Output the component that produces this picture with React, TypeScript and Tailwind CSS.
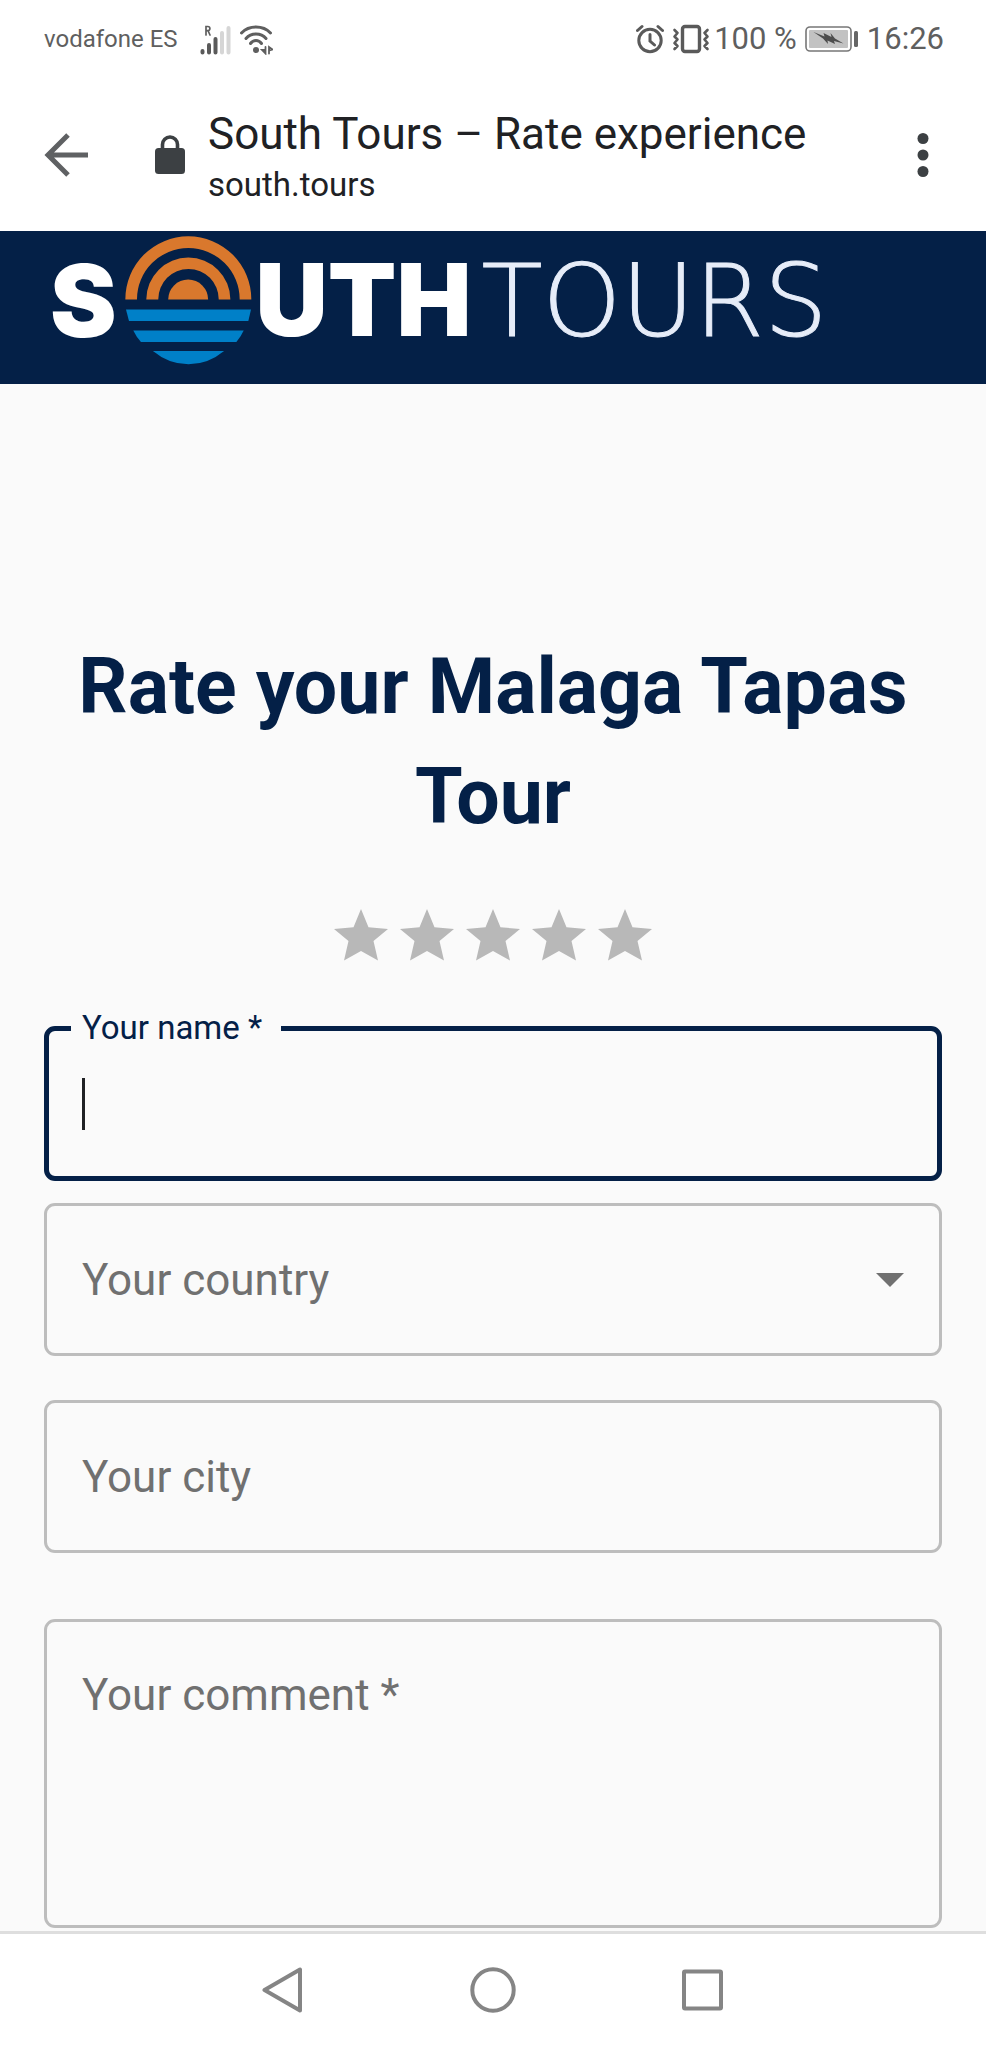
import React from "react";

const STARS = [1, 2, 3, 4, 5];

function SignalIcon() {
  return (
    <svg width="31" height="31" viewBox="0 0 31 31" fill="none" strokeWidth="4" strokeLinecap="round" aria-hidden="true">
      <path d="M6 11V2.500h1.800a2 2 0 0 1 0 4.200H6m2 0L10 11" stroke="#5f5f5f" strokeWidth="1.700" />
      <path d="M2.500 27v1.500M9 21v7.500M15.500 15v13.500" stroke="#5a5a5a" />
      <path d="M22 9v19.500M28.500 4v24.500" stroke="#d6d6d6" />
    </svg>
  );
}

function WifiIcon() {
  return (
    <svg width="34" height="31" viewBox="0 0 34 31" fill="none" stroke="#5f5f5f" strokeWidth="3" strokeLinecap="round" aria-hidden="true">
      <path d="M2.500 9C10 1 24 1 31.500 9M7 14.500c5-6 15-6 20 0M11.500 19.500c3-4 8-4 11 0" />
      <circle cx="17" cy="26" r="3" fill="#5f5f5f" stroke="none" />
      <path d="M26.500 23v6.500l-3.500-3.500h3M30 29.500V23l3.500 2.500-3 1" strokeWidth="1.800" />
    </svg>
  );
}

function AlarmIcon() {
  return (
    <svg width="28" height="30" viewBox="0 0 28 30" fill="none" stroke="#5a5a5a" strokeWidth="3" strokeLinecap="round" aria-hidden="true">
      <circle cx="14" cy="16.500" r="11.200" />
      <path d="M14 10.500v6.500l4.500 4M1.500 6.500 6 2.500M26.500 6.500 22 2.500" />
    </svg>
  );
}

function VibrateIcon() {
  return (
    <svg width="38" height="30" viewBox="0 0 38 30" fill="none" stroke="#5a5a5a" strokeLinejoin="round" strokeLinecap="round" aria-hidden="true">
      <rect x="10.500" y="2.500" width="17" height="25" rx="2.500" strokeWidth="3.400" />
      <path d="m2.500 6 3 3-3 3.500 3 3-3 3.500 3 3-3 3M35.500 6l-3 3 3 3.500-3 3 3 3.500-3 3 3 3" strokeWidth="2.600" />
    </svg>
  );
}

function BatteryIcon() {
  return (
    <svg width="54" height="26" viewBox="0 0 54 26" aria-hidden="true">
      <rect x="1" y="1" width="45" height="24" rx="4" fill="#fff" stroke="#777" strokeWidth="1.600" />
      <rect x="4" y="4" width="39" height="18" rx="1" fill="#c2c2c2" />
      <path d="m8.500 6 11 4.500L18.500 7l8 4-1-4 4.500 5.500 8.500 5-9.500-2.500 1 3-7.500-3.500.5 3.500-5-5.500z" fill="#4d4d4d" />
      <rect x="49" y="5" width="4" height="16" rx="1.500" fill="#666" />
    </svg>
  );
}

function SunMark() {
  return (
    <svg width="127" height="129" viewBox="286 34 382 388" aria-hidden="true">
      <g fill="#d9782d">
        <path d="M287 225a189.500 190 0 0 1 379 0h-35a154.500 155 0 0 0-309 0z" />
        <path d="M350 225a126.500 126 0 0 1 253 0h-35a91 92 0 0 0-182 0z" />
        <path d="M416 225a60 60 0 0 1 120 0z" />
      </g>
      <g fill="#0080c8">
        <path d="M289 255h376l-8 35H298z" />
        <path d="M311 318h332q-8 18-22 35H334q-14-16-23-35z" />
        <path d="M370 380h214q-48 40-107 40t-107-40z" />
      </g>
    </svg>
  );
}

function StatusBar() {
  return (
    <div className="flex h-[78px] items-center justify-between pr-[42px] pl-11 text-[#5f5f5f]">
      <div className="flex items-center">
        <span className="text-2xl">vodafone ES</span>
        <span className="ml-[22px] flex gap-2">
          <SignalIcon />
          <WifiIcon />
        </span>
      </div>
      <div className="flex items-center gap-2 text-[31px] leading-10">
        <div className="flex items-center gap-2">
          <AlarmIcon />
          <VibrateIcon />
        </div>
        <span className="-ml-1">100 %</span>
        <BatteryIcon />
        <span>16:26</span>
      </div>
    </div>
  );
}

function BrowserBar() {
  return (
    <div className="flex h-[153px] items-center pr-[57px] pl-11">
      <button type="button" aria-label="Close page">
        <svg width="44" height="44" viewBox="0 0 44 44" fill="none" stroke="#5f6163" strokeWidth="5" aria-hidden="true">
          <path d="M24 2 4 22l20 20M3 22h41" />
        </svg>
      </button>
      <svg className="ml-[67px]" width="30" height="39" viewBox="0 0 30 39" aria-hidden="true">
        <rect y="13" width="30" height="26" rx="3.500" fill="#3c4043" />
        <path d="M7.500 15V9.500a7.500 7.500 0 0 1 15 0V15" fill="none" stroke="#3c4043" strokeWidth="3.600" />
      </svg>
      <div className="mt-2 ml-[23px] flex-1 text-[#202124]">
        <p className="text-[44px] leading-[52px]">South Tours – Rate experience</p>
        <p className="text-[33px] leading-[50px]">south.tours</p>
      </div>
      <button type="button" aria-label="Menu">
        <svg width="12" height="44" viewBox="0 0 12 44" fill="#3c4043" aria-hidden="true">
          <circle cx="6" cy="5.500" r="5.500" />
          <circle cx="6" cy="22" r="5.500" />
          <circle cx="6" cy="38.500" r="5.500" />
        </svg>
      </button>
    </div>
  );
}

function SiteHeader() {
  return (
    <header className="h-[153px] bg-[#042047] pt-[5px] pl-[50px]">
      <a href="#home" className="flex h-[129px] items-center font-['Inter',sans-serif] text-[100px] leading-none text-white">
        <span className="font-black">S</span>
        <span className="mr-1 ml-2">
          <SunMark />
        </span>
        <span className="flex items-baseline gap-2.5">
          <span className="font-black">UTH</span>
          <span className="font-['DejaVu_Sans',sans-serif] font-extralight text-[#e6ecf8] [-webkit-text-stroke:1px_#e6ecf8]">TOURS</span>
        </span>
      </a>
    </header>
  );
}

function RatingForm() {
  return (
    <form className="flex flex-col px-11" onSubmit={(e) => e.preventDefault()}>
      <div className="mt-[52px] flex justify-center" role="group" aria-label="Rating">
        {STARS.map((n) => (
          <button key={n} type="button" aria-label={`${n} of 5`}>
            <svg width="66" height="66" viewBox="0 0 66 66" fill="#b8b8b8" aria-hidden="true">
              <path d="m33 5 7.500 18.200L60 25 45.500 37l4.500 19.500-17-9.500-17 9.500L20.500 37 6 25l19.500-1.800z" />
            </svg>
          </button>
        ))}
      </div>

      <fieldset className="mt-9 rounded-[11px] border-[5px] border-[#042047]">
        <legend className="ml-[22px] pr-[19px] pl-[11px] text-[33px] leading-[44px] text-[#042047]">
          <label htmlFor="name">Your name *</label>
        </legend>
        <div className="flex items-center pt-7 pr-9 pb-[46px] pl-[33px]">
          <span className="h-[52px] w-[3px] bg-[#202124]" />
          <input id="name" required className="h-[52px] min-w-0 flex-1 text-[44px] caret-transparent outline-none" />
        </div>
      </fieldset>

      <div className="relative mt-[22px]">
        <select
          aria-label="Your country"
          defaultValue=""
          className="block h-[153px] w-full appearance-none rounded-[11px] border-[3px] border-[#bdbdbd] px-[35px] text-[44px] text-[#707070] outline-none"
        >
          <option value="">Your country</option>
        </select>
        <svg className="pointer-events-none absolute top-1/2 right-[38px] -translate-y-1/2" width="28" height="14" viewBox="0 0 28 14" fill="#707070" aria-hidden="true">
          <path d="M0 0h28L14 14z" />
        </svg>
      </div>

      <input
        aria-label="Your city"
        placeholder="Your city"
        className="mt-11 h-[153px] rounded-[11px] border-[3px] border-[#bdbdbd] px-[35px] text-[44px] placeholder:text-[#707070] outline-none"
      />

      <textarea
        aria-label="Your comment"
        placeholder="Your comment *"
        className="mt-[66px] h-[309px] resize-none rounded-[11px] border-[3px] border-[#bdbdbd] px-[35px] py-[47px] text-[44px] leading-[52px] placeholder:text-[#707070] outline-none"
      />
    </form>
  );
}

function SystemNav() {
  return (
    <nav className="mt-[3px] flex h-[117px] items-center justify-center gap-[164px] border-t-[3px] border-[#dedede] bg-white pb-[3px]">
      <button type="button" aria-label="Back">
        <svg width="46" height="46" viewBox="0 0 46 46" fill="none" stroke="#858585" strokeWidth="4" strokeLinejoin="round" aria-hidden="true">
          <path d="M40 2.500v41L4.500 23z" />
        </svg>
      </button>
      <button type="button" aria-label="Home">
        <svg width="46" height="46" viewBox="0 0 46 46" fill="none" stroke="#858585" strokeWidth="4" aria-hidden="true">
          <circle cx="23" cy="23" r="20.700" />
        </svg>
      </button>
      <button type="button" aria-label="Recent apps">
        <svg width="46" height="46" viewBox="0 0 46 46" fill="none" stroke="#858585" strokeWidth="4" strokeLinejoin="round" aria-hidden="true">
          <rect x="4" y="4.500" width="37" height="37" rx="1" />
        </svg>
      </button>
    </nav>
  );
}

export default function App() {
  return (
    <div className="flex min-h-screen flex-col bg-[#fafafa] font-['Roboto',sans-serif]">
      <div className="bg-white">
        <StatusBar />
        <BrowserBar />
      </div>
      <SiteHeader />
      <main className="flex-1">
        <h1 className="mt-[248px] px-11 text-center text-[77px] leading-[110px] font-bold text-[#042047]">
          Rate your Malaga Tapas Tour
        </h1>
        <RatingForm />
      </main>
      <SystemNav />
    </div>
  );
}
